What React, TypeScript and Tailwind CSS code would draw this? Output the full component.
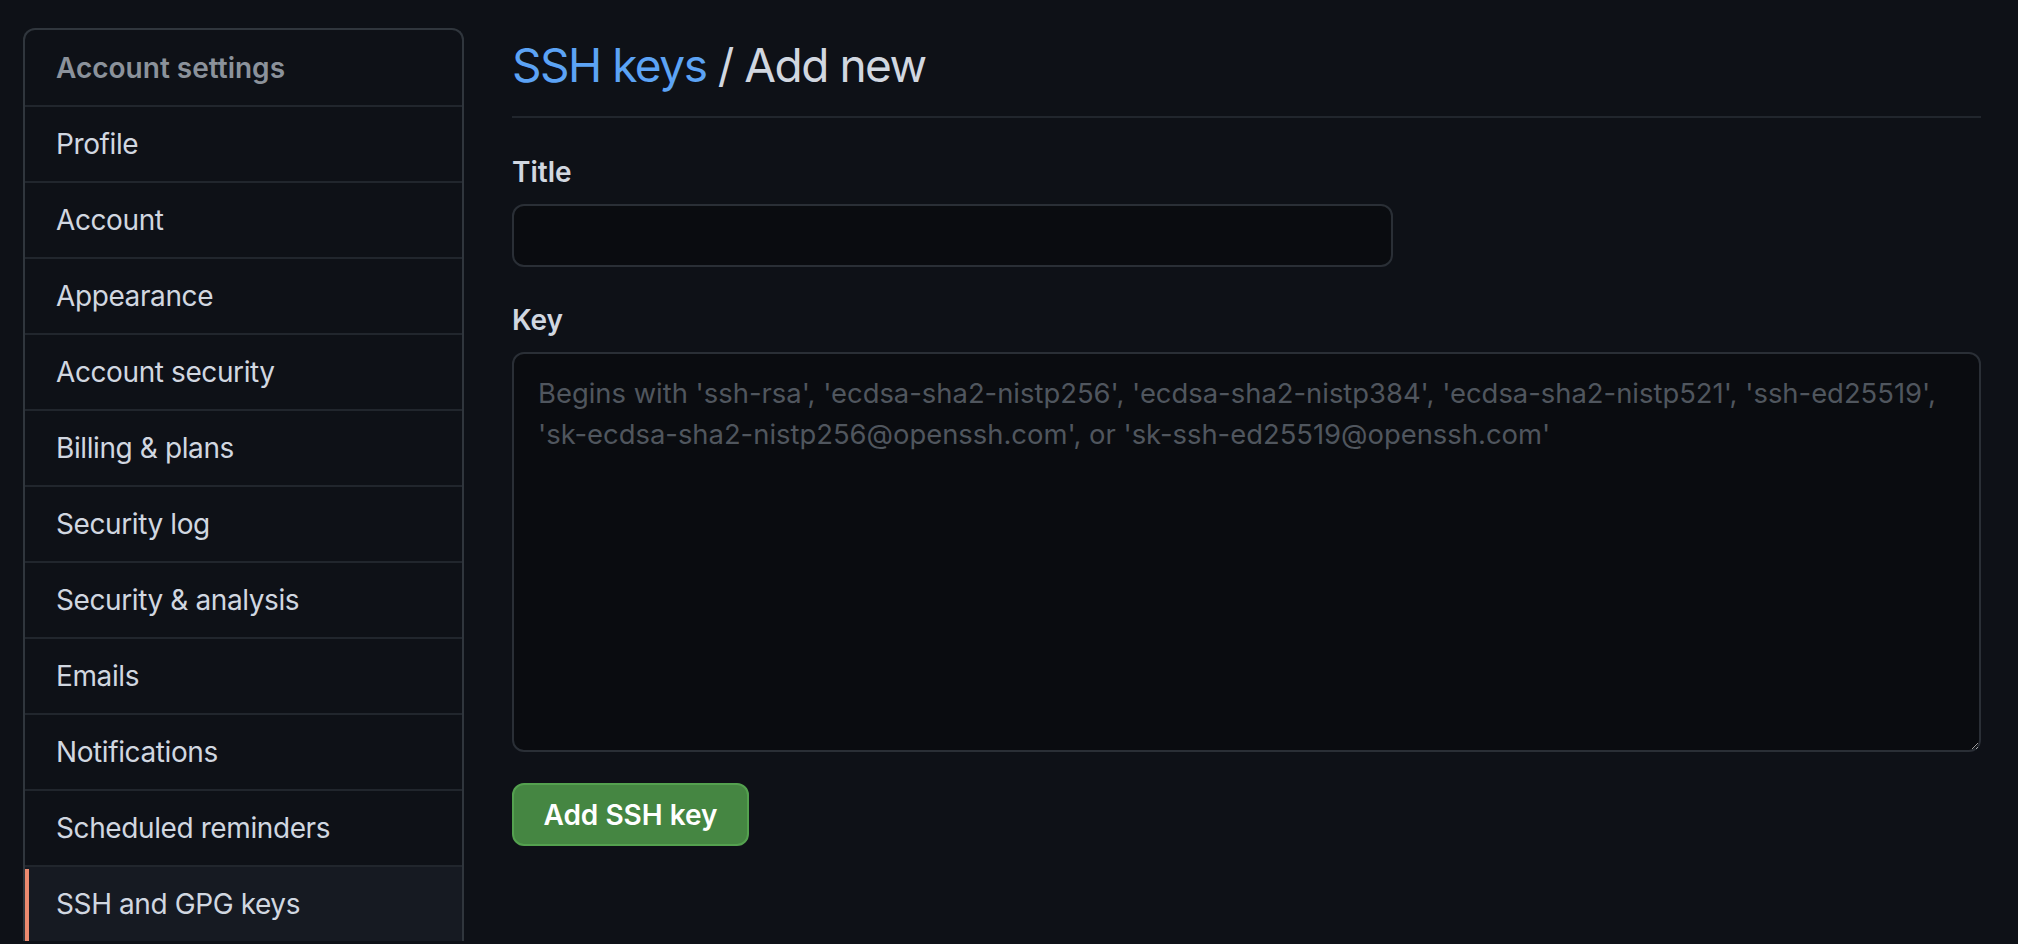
import React from 'react';

const items = [
  'Profile',
  'Account',
  'Appearance',
  'Account security',
  'Billing & plans',
  'Security log',
  'Security & analysis',
  'Emails',
  'Notifications',
  'Scheduled reminders',
  'SSH and GPG keys',
];

const Sidebar: React.FC = () => (
  <nav className="w-[441px] shrink-0 rounded-t-[12px] border-x-2 border-t-2 border-[#30363d] mt-[28px] self-start">
    <div className="h-[75px] flex items-center px-[31px] text-[28px] font-semibold text-[#8b929b]">
      Account settings
    </div>
    {items.map((label) => {
      const active = label === 'SSH and GPG keys';
      return (
        <div
          key={label}
          className={
            'relative h-[76px] flex items-center px-[31px] border-t-2 border-[#21262d] text-[28px] tracking-[-0.4px] text-[#d1d7e0] ' +
            (active ? 'bg-[#161a22]' : '')
          }
        >
          {active && <span className="absolute left-0 top-[2px] bottom-0 w-[4px] bg-[#ec8a6f]" />}
          {label}
        </div>
      );
    })}
  </nav>
);

export default function App() {
  return (
    <div
      className="w-[2018px] h-[944px] overflow-hidden bg-[#0e1117] flex gap-[48px] pl-[23px]"
      style={{ fontFamily: 'Inter, "Noto Sans", sans-serif' }}
    >
      <Sidebar />
      <main className="flex-1 pr-[37px] pt-[35px]">
        <div className="pb-[21px] border-b-2 border-[#21262d]">
          <h1 className="text-[46px] leading-[60px] font-normal tracking-[-1.5px] text-[#d1d7e0]">
            <span className="text-[#5ca3f5]">SSH keys</span> / Add new
          </h1>
        </div>

        <form className="pt-[34px] flex flex-col">
          <label className="text-[28px] leading-[40px] font-semibold text-[#d1d7e0]">Title</label>
          <input
            type="text"
            className="mt-[12px] w-[881px] h-[63px] rounded-[12px] border-2 border-[#2a2f36] bg-[#0a0c10] px-[18px] text-[28px] text-[#d1d7e0] outline-none"
          />

          <label className="mt-[33px] text-[28px] leading-[40px] font-semibold text-[#d1d7e0]">Key</label>
          <textarea
            className="mt-[12px] w-full h-[400px] rounded-[12px] border-2 border-[#2a2f36] bg-[#0a0c10] px-[24px] pt-[19px] pb-[16px] text-[27.4px] leading-[41px] text-[#d1d7e0] placeholder:text-[#50565e] outline-none"
            placeholder="Begins with 'ssh-rsa', 'ecdsa-sha2-nistp256', 'ecdsa-sha2-nistp384', 'ecdsa-sha2-nistp521', 'ssh-ed25519', 'sk-ecdsa-sha2-nistp256@openssh.com', or 'sk-ssh-ed25519@openssh.com'"
          />

          <div className="mt-[31px]">
            <button
              type="button"
              className="h-[63px] w-[237px] rounded-[12px] border-2 border-[#54a14f] bg-[#458642] text-[28px] font-semibold text-white"
            >
              Add SSH key
            </button>
          </div>
        </form>
      </main>
    </div>
  );
}
